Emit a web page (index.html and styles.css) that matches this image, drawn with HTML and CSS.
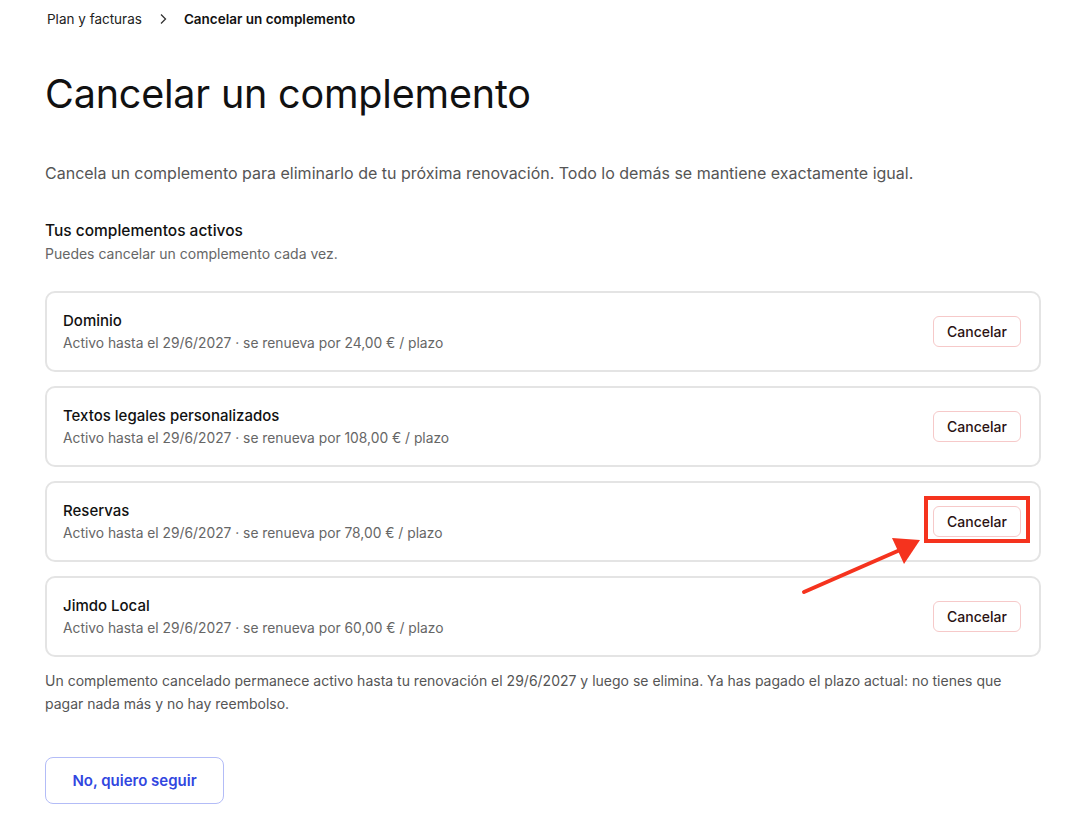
FILE: index.html
```html
<!DOCTYPE html>
<html lang="es">
<head>
    <meta charset="UTF-8">
    <meta name="viewport" content="width=device-width, initial-scale=1.0">
    <title>Cancelar un complemento</title>
    <link rel="stylesheet" href="styles.css">
</head>
<body>
    <main class="page">
        <nav class="crumbs">
            <a href="#plan">Plan y facturas</a>
            <svg class="crumb-sep" width="10" height="12" viewBox="0 0 10 12"><path d="M3 1.5 L7.5 6 L3 10.5" fill="none" stroke="#333" stroke-width="1.3"/></svg>
            <span class="crumb-current">Cancelar un complemento</span>
        </nav>

        <h1>Cancelar un complemento</h1>
        <p class="intro">Cancela un complemento para eliminarlo de tu próxima renovación. Todo lo demás se mantiene exactamente igual.</p>

        <h2>Tus complementos activos</h2>
        <p class="hint">Puedes cancelar un complemento cada vez.</p>

        <ul class="addons">
            <li class="addon">
                <div>
                    <div class="addon-name">Dominio</div>
                    <div class="addon-meta">Activo hasta el 29/6/2027 · se renueva por 24,00 € / plazo</div>
                </div>
                <button class="btn-cancel">Cancelar</button>
            </li>
            <li class="addon">
                <div>
                    <div class="addon-name">Textos legales personalizados</div>
                    <div class="addon-meta">Activo hasta el 29/6/2027 · se renueva por 108,00 € / plazo</div>
                </div>
                <button class="btn-cancel">Cancelar</button>
            </li>
            <li class="addon">
                <div>
                    <div class="addon-name">Reservas</div>
                    <div class="addon-meta">Activo hasta el 29/6/2027 · se renueva por 78,00 € / plazo</div>
                </div>
                <div class="marked">
                    <button class="btn-cancel">Cancelar</button>
                    <span class="mark-box"></span>
                </div>
            </li>
            <li class="addon">
                <div>
                    <div class="addon-name">Jimdo Local</div>
                    <div class="addon-meta">Activo hasta el 29/6/2027 · se renueva por 60,00 € / plazo</div>
                </div>
                <button class="btn-cancel">Cancelar</button>
            </li>
        </ul>

        <p class="note">Un complemento cancelado permanece activo hasta tu renovación el 29/6/2027 y luego se elimina. Ya has pagado el plazo actual: no tienes que pagar nada más y no hay reembolso.</p>

        <button class="btn-keep">No, quiero seguir</button>
    </main>

    <!-- annotation arrow -->
    <svg class="arrow" width="140" height="70" viewBox="0 0 140 70">
        <line x1="4" y1="62" x2="100" y2="20" stroke="#f5331e" stroke-width="4" stroke-linecap="round"/>
        <polygon points="120,10 92,8 104,34" fill="#f5331e"/>
    </svg>
</body>
</html>
```

FILE: styles.css
```css
body {
    margin: 0;
    font-family: Inter, "Noto Sans", sans-serif;
    color: #111;
    background: #fff;
}

.page {
    width: 996px;
    padding: 10px 0 40px 45px;
}

.crumbs {
    display: flex;
    align-items: center;
    gap: 14px;
    font-size: 13.5px;
    margin-left: 2px;
    height: 18px;
}

.crumbs a {
    color: #222;
    text-decoration: none;
}

.crumb-sep {
    margin: 0 2px;
}

.crumb-current {
    font-weight: 600;
}

h1 {
    font-size: 39.5px;
    font-weight: 400;
    letter-spacing: -0.2px;
    margin: 42px 0 0;
    line-height: 48px;
}

.intro {
    font-size: 16px;
    color: #555;
    margin: 44px 0 0;
    line-height: 22px;
}

h2 {
    font-size: 15.5px;
    font-weight: 500;
    margin: 36px 0 0;
    line-height: 22px;
}

.hint {
    font-size: 14px;
    color: #666;
    margin: 3px 0 0;
    line-height: 18px;
}

.addons {
    list-style: none;
    padding: 0;
    margin: 28px 0 0;
    display: flex;
    flex-direction: column;
    gap: 14px;
}

.addon {
    display: flex;
    justify-content: space-between;
    align-items: center;
    height: 77px;
    border: 2px solid #e4e4e4;
    border-radius: 10px;
    padding: 0 18px 0 16px;
}

.addon-name {
    font-size: 15px;
    font-weight: 500;
    line-height: 20px;
}

.addon-meta {
    font-size: 13.8px;
    color: #666;
    margin-top: 3px;
    line-height: 18px;
}

.btn-cancel {
    font-family: inherit;
    font-size: 14px;
    font-weight: 500;
    color: #2b1212;
    background: #fff;
    border: 1px solid #f6c9c9;
    border-radius: 6px;
    width: 88px;
    height: 31px;
    cursor: pointer;
}

.marked {
    position: relative;
}

.mark-box {
    position: absolute;
    left: -9px;
    top: -10px;
    width: 98px;
    height: 39px;
    border: 4px solid #f5331e;
}

.note {
    font-size: 14px;
    color: #555;
    line-height: 23px;
    margin: 12px 0 0;
}

.btn-keep {
    font-family: inherit;
    font-size: 15px;
    font-weight: 600;
    color: #3146e0;
    background: #fff;
    border: 1px solid #b3bcf7;
    border-radius: 8px;
    width: 179px;
    height: 47px;
    margin-top: 42px;
    cursor: pointer;
}

.arrow {
    position: absolute;
    left: 800px;
    top: 530px;
}
```
